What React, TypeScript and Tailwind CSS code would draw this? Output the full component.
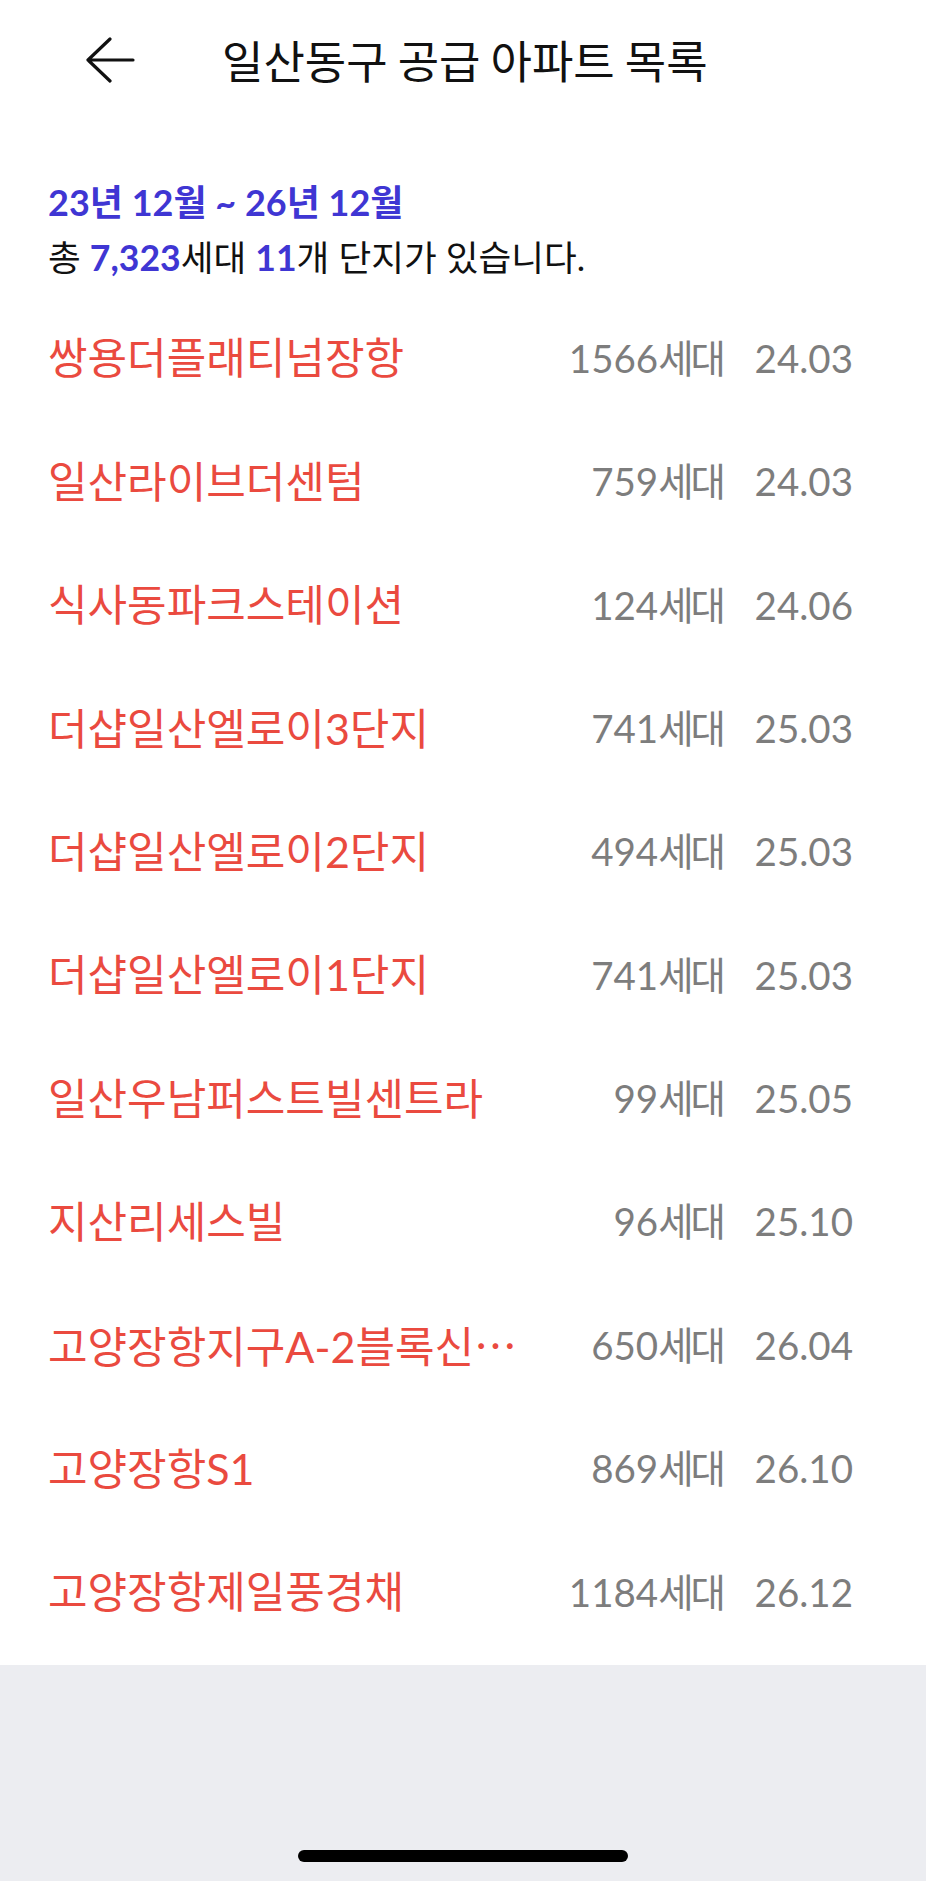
import React from "react";

const rows = [
  { name: "쌍용더플래티넘장항", units: "1566", date: "24.03" },
  { name: "일산라이브더센텀", units: "759", date: "24.03" },
  { name: "식사동파크스테이션", units: "124", date: "24.06" },
  { name: "더샵일산엘로이3단지", units: "741", date: "25.03" },
  { name: "더샵일산엘로이2단지", units: "494", date: "25.03" },
  { name: "더샵일산엘로이1단지", units: "741", date: "25.03" },
  { name: "일산우남퍼스트빌센트라", units: "99", date: "25.05" },
  { name: "지산리세스빌", units: "96", date: "25.10" },
  { name: "고양장항지구A-2블록신", units: "650", date: "26.04", cut: true },
  { name: "고양장항S1", units: "869", date: "26.10" },
  { name: "고양장항제일풍경채", units: "1184", date: "26.12" },
];

const latoKr = "font-['Lato','Noto_Sans_CJK_KR',sans-serif]";

export default function App() {
  return (
    <div className="w-[926px] min-h-[1881px] bg-[#ecedf1] flex flex-col">
      <div className="bg-white flex flex-col">
        {/* Header */}
        <div className="h-[126px] flex items-center">
          <svg
            className="ml-[85px] mb-[7px]"
            width="50"
            height="46"
            viewBox="0 0 50 46"
            fill="none"
            stroke="#111"
            strokeWidth="3.2"
            strokeLinecap="round"
            strokeLinejoin="round"
          >
            <path d="M25 2 L3 23 L25 44 M3 23 H48" />
          </svg>
          <h1 className="ml-[87px] mb-[8px] text-[45px] leading-none text-[#111] font-['Noto_Sans_CJK_KR',sans-serif] font-normal">
            일산동구 공급 아파트 목록
          </h1>
        </div>

        {/* Summary */}
        <div className={`pl-[48px] pt-[52px] ${latoKr}`}>
          <div className="text-[36px] leading-[48px] font-bold text-[#3f36d3]">
            23년 12월 ~ 26년 12월
          </div>
          <div className="text-[35.6px] leading-[64px] text-[#111]">
            총 <span className="font-bold text-[#3f36d3]">7,323</span>세대{" "}
            <span className="font-bold text-[#3f36d3]">11</span>개 단지가 있습니다.
          </div>
        </div>

        {/* List */}
        <div className="mt-[6.3px] mb-[11px] flex flex-col">
          {rows.map((r) => (
            <div
              key={r.name}
              className={`h-[123.4px] flex items-center pl-[48px] pr-[73px] ${latoKr}`}
            >
              <div className="flex-1 text-[43px] leading-none text-[#ea4a3f] whitespace-nowrap">
                {r.name}
                {r.cut && (
                  <span className="font-['Noto_Sans_CJK_KR',sans-serif]">…</span>
                )}
              </div>
              <div className="text-[38.5px] leading-none text-[#7d7d7d] text-right whitespace-nowrap">
                {r.units}
                <span className="tracking-[-3px] mr-[3px]">세대</span>
              </div>
              <div className="ml-[27px] w-[100px] text-[38.5px] leading-none text-[#7d7d7d] text-right">
                {r.date}
              </div>
            </div>
          ))}
        </div>
      </div>

      {/* Bottom area */}
      <div className="flex-1 h-[216px] flex flex-col items-center">
        <div className="mt-[185px] w-[330px] h-[12px] rounded-full bg-black" />
      </div>
    </div>
  );
}
